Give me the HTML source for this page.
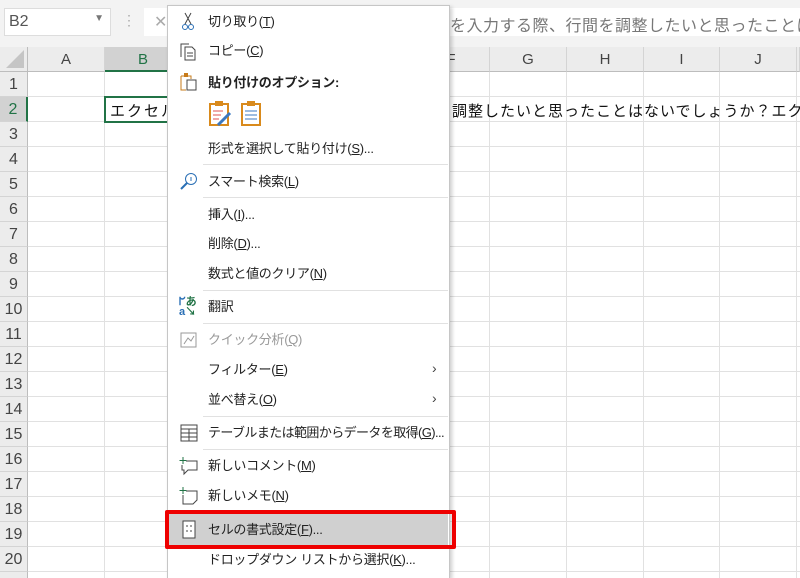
<!DOCTYPE html>
<html><head><meta charset="utf-8"><style>
*{margin:0;padding:0;box-sizing:border-box}
html,body{width:800px;height:578px;overflow:hidden}
body{background:#fff;position:relative;font-family:"Liberation Sans","Noto Sans CJK JP",sans-serif}
.a{position:absolute;white-space:nowrap}
.top{left:0;top:0;width:800px;height:47px;background:#f3f3f3}
.nb{left:4px;top:8px;width:107px;height:28px;background:#fff;border:1px solid #ddd;font-size:16px;color:#555;padding:4px 4px}
.fb{left:144px;top:8px;width:656px;height:28px;background:#fff;font-size:16px;color:#777;padding:4px 0 0 0;overflow:hidden}
.colh{top:47px;height:25px;background:#ececec;border-right:1px solid #d4d4d4;border-bottom:1px solid #bdbdbd;text-align:center;font-size:15px;color:#444;line-height:25px}
.rowh{left:0;width:28px;height:25px;background:#ececec;border-bottom:1px solid #d4d4d4;border-right:1px solid #bdbdbd;text-align:center;font-size:16px;color:#444;line-height:25px}
.hl{left:28px;width:772px;height:1px;background:#e1e1e1}
.vl{top:72px;width:1px;height:506px;background:#e1e1e1}
.menu{left:167px;top:5px;width:283px;height:573px;background:#fff;border:1px solid #c6c6c6;border-bottom:none;box-shadow:2px 2px 4px rgba(0,0,0,.2)}
.it{left:40px;font-size:13px;color:#222;line-height:16px;letter-spacing:-0.3px}
.sep{left:35px;width:245px;height:1px;background:#e1e1e1}
.dis{color:#999}
u{text-decoration:underline}
</style></head><body>
<div class="a top"></div>
<div class="a nb">B2<span style="position:absolute;right:6px;top:4px;font-size:10px;color:#777">▼</span></div>
<div class="a" style="left:122px;top:12px;color:#aaa;font-size:14px">⋮</div>
<div class="a fb"><span style="color:#aaa;padding-left:10px">✕</span><span style="position:absolute;left:306px;top:4px;white-space:nowrap;letter-spacing:0.5px">を入力する際、行間を調整したいと思ったことはな</span></div>
<div class="a" style="left:0;top:47px;width:28px;height:25px;background:#ececec;border-right:1px solid #bdbdbd;border-bottom:1px solid #bdbdbd"><div style="position:absolute;right:3px;bottom:3px;width:0;height:0;border-left:18px solid transparent;border-bottom:18px solid #c5c5c5"></div></div>
<div class="a colh" style="left:28px;width:77px">A</div>
<div class="a colh" style="left:105px;width:77px;background:#d2d2d2;border-bottom:2px solid #217346;color:#217346">B</div>
<div class="a colh" style="left:182px;width:77px"></div>
<div class="a colh" style="left:259px;width:77px"></div>
<div class="a colh" style="left:336px;width:77px"></div>
<div class="a colh" style="left:413px;width:77px">F</div>
<div class="a colh" style="left:490px;width:77px">G</div>
<div class="a colh" style="left:567px;width:77px">H</div>
<div class="a colh" style="left:644px;width:76px">I</div>
<div class="a colh" style="left:720px;width:77px">J</div>
<div class="a colh" style="left:797px;width:3px"></div>
<div class="a vl" style="left:104px"></div><div class="a vl" style="left:181px"></div><div class="a vl" style="left:489px"></div><div class="a vl" style="left:566px"></div><div class="a vl" style="left:643px"></div><div class="a vl" style="left:719px"></div><div class="a vl" style="left:796px"></div>
<div id="rows"></div>
<script>
let h='';for(let i=1;i<=21;i++){let t=72+(i-1)*25;h+=`<div class="a rowh" style="top:${t}px${i==2?';background:#d2d2d2;color:#217346;border-right:2px solid #217346':''}">${i<=20?i:''}</div><div class="a hl" style="top:${t+24}px"></div>`;}
document.getElementById('rows').outerHTML=h;
</script>
<div class="a" style="left:104px;top:96px;width:80px;height:27px;border:2px solid #217346"></div>
<div class="a" style="left:110px;top:100px;font-size:15px;letter-spacing:2px;color:#111">エクセル</div>
<div class="a" style="left:452px;top:100px;font-size:15px;letter-spacing:1px;color:#111">調整したいと思ったことはないでしょうか？エクセ</div>
<div class="a menu">
<svg class="a" style="left:12px;top:6px" width="18" height="20"><path d="M5 1l6 11M11 1L5 12" stroke="#444" fill="none"/><circle cx="5" cy="15" r="2.5" stroke="#2a6fb5" fill="none"/><circle cx="11" cy="15" r="2.5" stroke="#2a6fb5" fill="none"/></svg>
<div class="a it" style="top:8px">切り取り(<u>T</u>)</div>
<svg class="a" style="left:11px;top:36px" width="20" height="20"><path d="M2 15V2h8M6 5h7l3 3v10H6z" stroke="#444" fill="none"/><path d="M8 11h6M8 14h6" stroke="#444"/></svg>
<div class="a it" style="top:37px">コピー(<u>C</u>)</div>
<svg class="a" style="left:11px;top:66px" width="20" height="20"><path d="M2 4h10v3M2 4v14h5" stroke="#c77b1a" fill="none"/><rect x="5" y="1" width="4" height="4" fill="#c77b1a"/><rect x="8" y="8" width="9" height="10" stroke="#444" fill="#fff"/></svg>
<div class="a it" style="top:69px;font-weight:bold">貼り付けのオプション:</div>
<svg class="a" style="left:40px;top:94px" width="26" height="28"><rect x="2" y="4" width="18" height="21" fill="#fff" stroke="#d98a1c" stroke-width="2"/><rect x="7" y="1" width="8" height="5" fill="#d98a1c"/><path d="M5 11h10M5 15h8M5 19h6" stroke="#e05050"/><path d="M10 25l12-12" stroke="#3b78c0" stroke-width="3"/></svg>
<svg class="a" style="left:72px;top:94px" width="24" height="28"><rect x="2" y="4" width="18" height="21" fill="#fff" stroke="#d98a1c" stroke-width="2"/><rect x="7" y="1" width="8" height="5" fill="#d98a1c"/><path d="M5 11h12M5 15h12M5 19h12" stroke="#3b78c0"/></svg>
<div class="a it" style="top:135px">形式を選択して貼り付け(<u>S</u>)...</div>
<div class="a sep" style="top:158px"></div>
<svg class="a" style="left:11px;top:166px" width="20" height="20"><circle cx="12" cy="7" r="5.5" stroke="#2a6fb5" fill="none"/><path d="M8 11l-6 6" stroke="#2a6fb5" stroke-width="2"/><path d="M12 5v4" stroke="#2a6fb5"/></svg>
<div class="a it" style="top:168px">スマート検索(<u>L</u>)</div>
<div class="a sep" style="top:191px"></div>
<div class="a it" style="top:201px">挿入(<u>I</u>)...</div>
<div class="a it" style="top:230px">削除(<u>D</u>)...</div>
<div class="a it" style="top:260px">数式と値のクリア(<u>N</u>)</div>
<div class="a sep" style="top:284px"></div>
<div class="a" style="left:11px;top:291px;font-size:11px;line-height:10px;font-weight:bold"><span style="color:#2a6fb5">ᖸ</span><span style="color:#217346">あ</span><br><span style="color:#2a6fb5">a</span><span style="color:#217346">↘</span></div>
<div class="a it" style="top:293px">翻訳</div>
<div class="a sep" style="top:317px"></div>
<svg class="a" style="left:11px;top:324px" width="20" height="20"><rect x="2" y="3" width="15" height="14" stroke="#999" fill="none"/><path d="M5 14l4-6 3 3 3-5" stroke="#999" fill="none"/></svg>
<div class="a it dis" style="top:326px">クイック分析(<u>Q</u>)</div>
<div class="a it" style="top:356px">フィルター(<u>E</u>)</div>
<div class="a" style="left:264px;top:354px;font-size:14px;color:#444">›</div>
<div class="a it" style="top:386px">並べ替え(<u>O</u>)</div>
<div class="a" style="left:264px;top:384px;font-size:14px;color:#444">›</div>
<div class="a sep" style="top:410px"></div>
<svg class="a" style="left:11px;top:417px" width="20" height="20"><rect x="2" y="2" width="16" height="16" stroke="#444" fill="none"/><path d="M2 6h16M2 10h16M2 14h16M10 6v12" stroke="#444"/></svg>
<div class="a it" style="top:419px;letter-spacing:-0.6px">テーブルまたは範囲からデータを取得(<u>G</u>)...</div>
<div class="a sep" style="top:443px"></div>
<svg class="a" style="left:11px;top:450px" width="20" height="20"><path d="M7 5h11v9H9l-4 4v-4H3V9" stroke="#444" fill="none"/><path d="M4 1v7M0.5 4.5h7" stroke="#217346"/></svg>
<div class="a it" style="top:452px">新しいコメント(<u>M</u>)</div>
<svg class="a" style="left:11px;top:480px" width="20" height="20"><path d="M7 5h11v9l-4 4H4V9" stroke="#444" fill="none"/><path d="M4 1v7M0.5 4.5h7" stroke="#217346"/></svg>
<div class="a it" style="top:482px">新しいメモ(<u>N</u>)</div>
<div class="a" style="left:1px;top:507px;width:279px;height:34px;background:#d0d0d0"></div>
<svg class="a" style="left:12px;top:514px" width="20" height="20"><rect x="3" y="1" width="12" height="17" stroke="#444" fill="#fff"/><path d="M6 6h2M10 6h2M6 11h2M10 11h2" stroke="#444"/></svg>
<div class="a it" style="top:516px">セルの書式設定(<u>F</u>)...</div>
<div class="a it" style="top:546px">ドロップダウン リストから選択(<u>K</u>)...</div>
</div>
<div class="a" style="left:165px;top:510px;width:291px;height:39px;border:4px solid #ee0000;border-radius:2px"></div>
</body></html>
